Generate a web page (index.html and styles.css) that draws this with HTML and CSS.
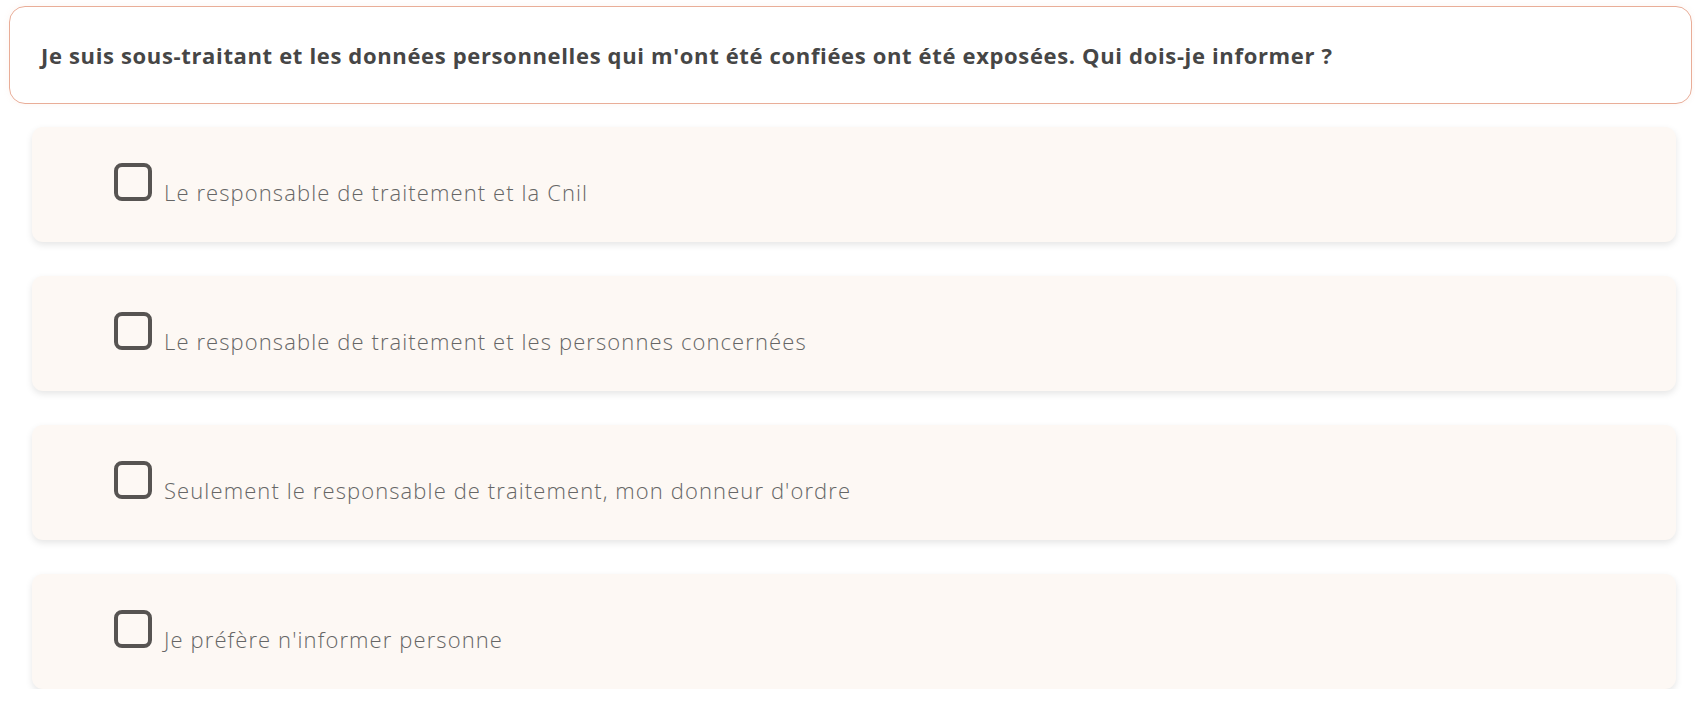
FILE: index.html
```html
<!DOCTYPE html>
<html lang="fr">
<head>
<meta charset="utf-8">
<title>Question</title>
<link rel="stylesheet" href="styles.css">
</head>
<body>
<div class="quiz">
  <div class="question">
    <p class="question-text">Je suis sous-traitant et les données personnelles qui m'ont été confiées ont été exposées. Qui dois-je informer ?</p>
  </div>
  <ul class="options">
    <li class="option"><span class="box"></span><span class="label">Le responsable de traitement et la Cnil</span></li>
    <li class="option"><span class="box"></span><span class="label">Le responsable de traitement et les personnes concernées</span></li>
    <li class="option"><span class="box"></span><span class="label">Seulement le responsable de traitement, mon donneur d'ordre</span></li>
    <li class="option"><span class="box"></span><span class="label">Je préfère n'informer personne</span></li>
  </ul>
</div>
</body>
</html>
```
FILE: styles.css
```css
html, body {
  margin: 0;
  padding: 0;
  background: #ffffff;
}
body {
  font-family: "Open Sans", "Lato", sans-serif;
  color: #4a4a4a;
}
.quiz {
  padding: 6px 3px 0 9px;
}
.question {
  height: 98px;
  box-sizing: border-box;
  border: 1px solid #e9ad98;
  border-radius: 16px;
  display: flex;
  align-items: center;
  padding: 0 31px;
  box-shadow: 0 0 6px rgba(233, 173, 152, 0.12);
}
.question-text {
  margin: 0;
  font-size: 22px;
  font-weight: 700;
  letter-spacing: 0.65px;
  color: #464646;
}
.options {
  list-style: none;
  margin: 23px 0 0 0;
  padding: 0 16px 0 23px;
  display: flex;
  flex-direction: column;
  gap: 34px;
}
.option {
  height: 115px;
  box-sizing: border-box;
  background: #fdf8f4;
  border-radius: 11px;
  box-shadow: 0 3px 7px rgba(0, 0, 0, 0.1);
  padding: 36px 0 0 82px;
  display: flex;
  align-items: baseline;
}
.box {
  width: 38px;
  height: 38px;
  box-sizing: border-box;
  border: 4px solid #575452;
  border-radius: 8px;
  flex: none;
  display: inline-block;
}
.label {
  margin-left: 12px;
  font-size: 22px;
  font-weight: 300;
  letter-spacing: 1.1px;
  color: #666666;
}
```
